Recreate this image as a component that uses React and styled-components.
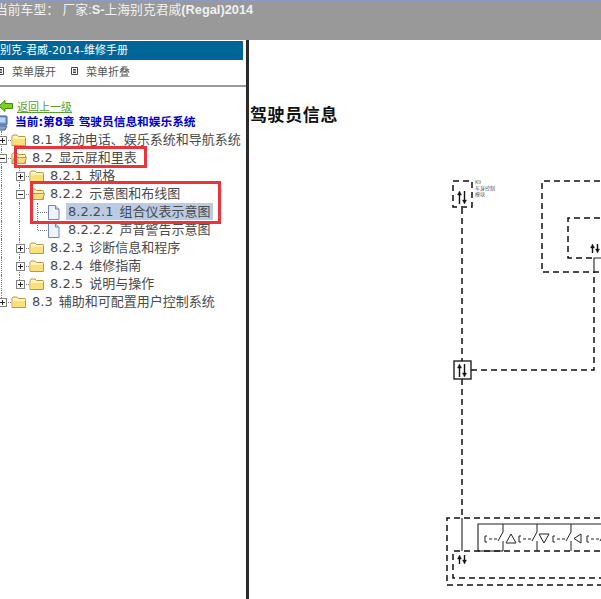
import React from 'react';
import styled, { createGlobalStyle } from 'styled-components';

const CJK = '"Noto Sans CJK SC", sans-serif';
const TREE_FONT = `"DejaVu Sans", ${CJK}`;

const GlobalStyle = createGlobalStyle`
  html, body {
    margin: 0;
    padding: 0;
    background: #fff;
    overflow: hidden;
  }
`;

const Page = styled.div`
  width: 601px;
  height: 599px;
  display: flex;
  flex-direction: column;
  overflow: hidden;
`;

const TopBar = styled.header`
  height: 39px;
  flex: none;
  background: #999;
  border-top: 1px solid #8c9ac8;
  overflow: hidden;
`;

const CarTitle = styled.div`
  margin-left: -5px;
  white-space: pre;
  color: #f0f0f0;
  font: bold 12.8px/17px "Liberation Sans", ${CJK};
  span {
    font-weight: 400;
  }
`;

const Main = styled.div`
  flex: 1;
  display: flex;
  min-height: 0;
`;

const Sidebar = styled.aside`
  width: 246px;
  flex: none;
  background: #fff;
  border-right: 3px solid #2b2b2b;
  display: flex;
  flex-direction: column;
  overflow: hidden;
`;

const ManualTitle = styled.div`
  width: 243px;
  height: 19px;
  margin-top: 1px;
  background: #006699;
  color: #fff;
  font: 11px/19px ${TREE_FONT};
  white-space: nowrap;
  overflow: hidden;
`;

const MenuBar = styled.div`
  height: 27px;
  border-bottom: 2px solid #999;
  display: flex;
  align-items: center;
  margin-left: -3px;
  padding-bottom: 3px;
  box-sizing: border-box;
`;

const MenuAction = styled.span`
  display: flex;
  align-items: center;
  gap: 8px;
  margin-right: 15px;
  color: #555;
  font: 11px/14px ${CJK};
`;

const MenuGlyph = styled.svg`
  width: 7px;
  height: 8px;
  flex: none;
`;

const TreePanel = styled.div`
  position: relative;
  flex: 1;
  padding-top: 10px;
`;

const BackRow = styled.a`
  display: flex;
  align-items: center;
  gap: 4px;
  height: 17px;
  margin-left: -1px;
  color: #5a9e2f;
  text-decoration: underline;
  font: 11px/16px ${CJK};
`;

const ChapterRow = styled.div`
  display: flex;
  align-items: center;
  gap: 7px;
  height: 17px;
  margin-left: -6px;
  color: #0000cc;
  font: bold 11.7px/17px "DejaVu Sans", ${CJK};
  white-space: nowrap;
`;

const Tree = styled.ul`
  list-style: none;
  margin: 0 0 0 -7px;
  padding: 0;
`;

const Row = styled.li`
  height: 18px;
  display: flex;
  align-items: stretch;
`;

const Guide = styled.span`
  width: 18px;
  flex: none;
  position: relative;
  &::before {
    content: '';
    position: absolute;
    left: 8px;
    top: 0;
    bottom: ${(p) => (p.$end ? '9px' : '0')};
    border-left: 1px dotted #777;
  }
  &::after {
    content: '';
    display: ${(p) => (p.$branch ? 'block' : 'none')};
    position: absolute;
    left: 9px;
    right: 0;
    top: 9px;
    border-top: 1px dotted #777;
  }
`;

const ExpanderCell = styled(Guide)`
  display: flex;
  align-items: center;
  justify-content: center;
`;

const Expander = styled.svg`
  position: relative;
  z-index: 1;
  width: 9px;
  height: 9px;
  background: #fff;
`;

const IconSlot = styled.span`
  width: 19px;
  flex: none;
  display: flex;
  align-items: center;
  justify-content: flex-start;
`;

const Label = styled.span`
  padding: 0 2px;
  height: 17px;
  color: #4a4a4a;
  background: ${(p) => (p.$selected ? '#bccbe4' : 'transparent')};
  font: 13px/17px ${TREE_FONT};
  word-spacing: 2px;
  white-space: pre;
`;

const Callout = styled.div`
  position: absolute;
  left: ${(p) => p.$x}px;
  top: ${(p) => p.$y}px;
  width: ${(p) => p.$w}px;
  height: ${(p) => p.$h}px;
  border: 3px solid #e8343a;
  box-sizing: border-box;
  pointer-events: none;
`;

const Content = styled.main`
  flex: 1;
  min-width: 0;
  background: #fff;
  overflow: hidden;
`;

const Heading = styled.h2`
  margin: 0;
  padding: 63px 0 0 1px;
  height: 27px;
  color: #111;
  font: bold 17px/22px ${CJK};
  letter-spacing: 0.6px;
`;

const Diagram = styled.svg`
  display: block;
  width: 352px;
  height: 469px;
`;

function Folder({ open }) {
  return (
    <svg width="16" height="14" viewBox="0 0 16 14">
      <path d="M1 3.5 L2 2 H6 L7.5 3.5 H14 L14.5 4.5 V12.5 H1 Z" fill="#fff3b8" stroke="#b79a45" />
      <path d="M1.5 6 H14 V12 H1.5 Z" fill={open ? '#f3d266' : '#fbdf78'} />
      {open && <path d="M1 12.5 L3.5 6.5 H15.5 L13.5 12.5 Z" fill="#f9dd7c" stroke="#b79a45" />}
    </svg>
  );
}

function FileIcon() {
  return (
    <svg width="13" height="15" viewBox="0 0 13 15">
      <path d="M1.5 .5 H8.5 L12 4 V14.5 H1.5 Z" fill="#eef2fb" stroke="#6f86b5" />
      <path d="M8.5 .5 V4 H12" fill="#cfdaf0" stroke="#6f86b5" />
    </svg>
  );
}

function ExpanderBox({ open }) {
  return (
    <Expander viewBox="0 0 9 9">
      <rect x=".5" y=".5" width="8" height="8" fill="#fff" stroke="#808080" />
      <path d="M2 4.5 H7" stroke="#222" />
      {!open && <path d="M4.5 2 V7" stroke="#222" />}
    </Expander>
  );
}

const TREE = [
  { label: '8.1 移动电话、娱乐系统和导航系统', depth: 0 },
  { label: '8.2 显示屏和里表', depth: 0, open: true },
  { label: '8.2.1 规格', depth: 1 },
  { label: '8.2.2 示意图和布线图', depth: 1, open: true },
  { label: '8.2.2.1 组合仪表示意图', depth: 2, file: true, selected: true },
  { label: '8.2.2.2 声音警告示意图', depth: 2, file: true, last: true },
  { label: '8.2.3 诊断信息和程序', depth: 1 },
  { label: '8.2.4 维修指南', depth: 1 },
  { label: '8.2.5 说明与操作', depth: 1, last: true },
  { label: '8.3 辅助和可配置用户控制系统', depth: 0, last: true },
];

function TreeRow({ item }) {
  const guides = Array.from({ length: item.depth });
  return (
    <Row>
      {guides.map((_, i) => (
        <Guide key={i} />
      ))}
      {item.file ? (
        <Guide $branch $end={item.last} />
      ) : (
        <ExpanderCell $branch $end={item.last}>
          <ExpanderBox open={item.open} />
        </ExpanderCell>
      )}
      <IconSlot>{item.file ? <FileIcon /> : <Folder open={item.open} />}</IconSlot>
      <Label $selected={item.selected}>{item.label}</Label>
    </Row>
  );
}

function ArrowPair({ x, y, h = 12 }) {
  return (
    <g stroke="#111" strokeWidth="1.4" fill="#111">
      <path d={`M${x - 2.5} ${y + h} V${y + 3}`} />
      <path d={`M${x - 2.5} ${y} l-2 4 h4 Z`} strokeWidth=".4" />
      <path d={`M${x + 2.5} ${y} V${y + h - 3}`} />
      <path d={`M${x + 2.5} ${y + h} l-2 -4 h4 Z`} strokeWidth=".4" />
    </g>
  );
}

function SwitchCell({ x, children }) {
  return (
    <g stroke="#222" fill="none" strokeWidth="1">
      <path d={`M${x} 524 V532 L${x - 5} 541`} />
      <path d={`M${x} 541 V551`} />
      <path d={`M${x - 18} 536 H${x - 16} M${x - 18} 536 V542 H${x - 16} M${x - 14} 539 H${x - 11} M${x - 9} 539 H${x - 6}`} />
      {children}
    </g>
  );
}

function WiringDiagram() {
  return (
    <Diagram viewBox="249 130 352 469">
      <g fill="none" stroke="#111" strokeWidth="1.5" strokeDasharray="6 4">
        <rect x="453" y="181" width="19" height="26" />
        <path d="M462 208 V361" />
        <path d="M471 370 H594 V272" />
        <path d="M620 181 H542 V272 H620" />
        <path d="M620 218 H568 V258 H594" />
        <path d="M462 379 V518" />
        <path d="M620 518 H447 V585 H620" />
        <path d="M620 551 H453 V578 H620" />
      </g>
      <g fill="none" stroke="#222" strokeWidth="1.1">
        <path d="M594 272 V258 H620" />
        <path d="M462 518 V551" />
        <path d="M478 551 V524 H620" />
        <path d="M478 551 H503" />
        <rect x="454" y="361" width="17" height="18" strokeWidth="1.4" />
      </g>
      <ArrowPair x={462} y={191} h={13} />
      <ArrowPair x={595} y={244} h={9} />
      <ArrowPair x={462} y={364} h={13} />
      <ArrowPair x={462} y={555} h={9} />
      <SwitchCell x={503}>
        <path d="M506 543 L511 534 L516 543 Z" />
      </SwitchCell>
      <SwitchCell x={537}>
        <path d="M539 534 H549 L544 543 Z" />
      </SwitchCell>
      <SwitchCell x={571}>
        <path d="M581 534 V543 L574 538.5 Z" />
      </SwitchCell>
      <SwitchCell x={605} />
      <g fill="#555" fontSize="5" fontFamily={CJK}>
        <text x="475" y="184">K9</text>
        <text x="475" y="190">车身控制</text>
        <text x="475" y="196">模块</text>
      </g>
    </Diagram>
  );
}

export default function App() {
  return (
    <>
      <GlobalStyle />
      <Page>
        <TopBar>
          <CarTitle>
            <span>当前车型： 厂家:</span>S-<span>上海别克君威</span>(Regal)2014
          </CarTitle>
        </TopBar>
        <Main>
          <Sidebar>
            <ManualTitle>别克-君威-2014-维修手册</ManualTitle>
            <MenuBar>
              <MenuAction>
                <MenuGlyph viewBox="0 0 7 8">
                  <path d="M.5 .5 H6.5 V7.5 H.5 Z M2 2.5 H5 M2 4 H5 M2 5.5 H5" fill="none" stroke="#444" />
                </MenuGlyph>
                菜单展开
              </MenuAction>
              <MenuAction>
                <MenuGlyph viewBox="0 0 7 8">
                  <path d="M.5 .5 H6.5 V7.5 H.5 Z M2 2.5 H5 M2 4 H5 M2 5.5 H5" fill="none" stroke="#444" />
                </MenuGlyph>
                菜单折叠
              </MenuAction>
            </MenuBar>
            <TreePanel>
              <BackRow>
                <svg width="14" height="12" viewBox="0 0 14 12">
                  <path d="M0 6 L6 .5 V3.5 H13.5 V8.5 H6 V11.5 Z" fill="#7fd11b" stroke="#3f8a12" />
                </svg>
                返回上一级
              </BackRow>
              <ChapterRow>
                <svg width="14" height="16" viewBox="0 0 14 16">
                  <rect x="3" y="1" width="10" height="9" rx="1" fill="#6c93d6" stroke="#3d5d9a" />
                  <rect x="4.5" y="2.5" width="7" height="5" fill="#bcd4f5" />
                  <path d="M2 11 H13 L11 15 H4 Z" fill="#8aa3c9" stroke="#4a6390" />
                </svg>
                当前:第8章 驾驶员信息和娱乐系统
              </ChapterRow>
              <Tree>
                {TREE.map((item) => (
                  <TreeRow key={item.label} item={item} />
                ))}
              </Tree>
              <Callout $x={14} $y={59} $w={133} $h={22} />
              <Callout $x={30} $y={94} $w={191} $h={43} />
            </TreePanel>
          </Sidebar>
          <Content>
            <Heading>驾驶员信息</Heading>
            <WiringDiagram />
          </Content>
        </Main>
      </Page>
    </>
  );
}
